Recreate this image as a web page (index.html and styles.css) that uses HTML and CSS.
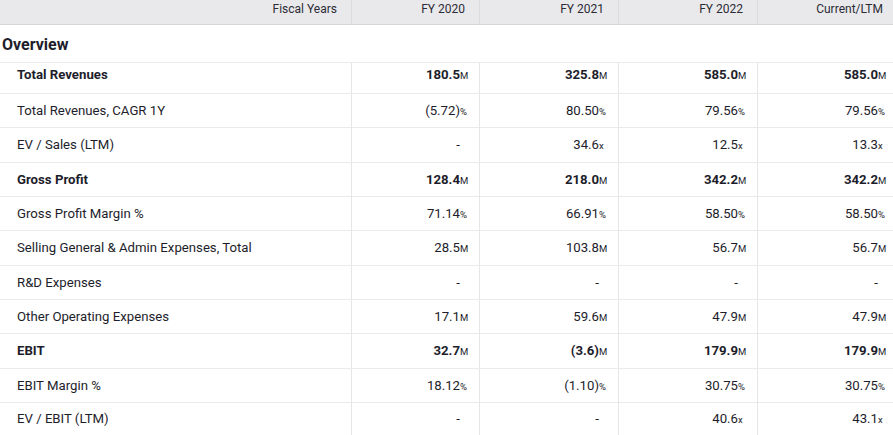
FILE: index.html
```html
<!DOCTYPE html>
<html>
<head>
<meta charset="utf-8">
<link rel="stylesheet" href="styles.css">
</head>
<body>
<div class="fin">
  <div class="row head">
    <div class="cell label">Fiscal Years</div>
    <div class="cell">FY 2020</div>
    <div class="cell">FY 2021</div>
    <div class="cell">FY 2022</div>
    <div class="cell">Current/LTM</div>
  </div>
  <div class="row section"><div class="section-title">Overview</div></div>

  <div class="row first strong">
    <div class="cell label">Total Revenues</div>
    <div class="cell">180.5<span class="sfx">M</span></div>
    <div class="cell">325.8<span class="sfx">M</span></div>
    <div class="cell">585.0<span class="sfx">M</span></div>
    <div class="cell">585.0<span class="sfx">M</span></div>
  </div>
  <div class="row">
    <div class="cell label">Total Revenues, CAGR 1Y</div>
    <div class="cell">(5.72)<span class="sfx">%</span></div>
    <div class="cell">80.50<span class="sfx">%</span></div>
    <div class="cell">79.56<span class="sfx">%</span></div>
    <div class="cell">79.56<span class="sfx">%</span></div>
  </div>
  <div class="row">
    <div class="cell label">EV / Sales (LTM)</div>
    <div class="cell">-<span class="sfx"></span></div>
    <div class="cell">34.6<span class="sfx">x</span></div>
    <div class="cell">12.5<span class="sfx">x</span></div>
    <div class="cell">13.3<span class="sfx">x</span></div>
  </div>
  <div class="row strong">
    <div class="cell label">Gross Profit</div>
    <div class="cell">128.4<span class="sfx">M</span></div>
    <div class="cell">218.0<span class="sfx">M</span></div>
    <div class="cell">342.2<span class="sfx">M</span></div>
    <div class="cell">342.2<span class="sfx">M</span></div>
  </div>
  <div class="row">
    <div class="cell label">Gross Profit Margin %</div>
    <div class="cell">71.14<span class="sfx">%</span></div>
    <div class="cell">66.91<span class="sfx">%</span></div>
    <div class="cell">58.50<span class="sfx">%</span></div>
    <div class="cell">58.50<span class="sfx">%</span></div>
  </div>
  <div class="row">
    <div class="cell label">Selling General &amp; Admin Expenses, Total</div>
    <div class="cell">28.5<span class="sfx">M</span></div>
    <div class="cell">103.8<span class="sfx">M</span></div>
    <div class="cell">56.7<span class="sfx">M</span></div>
    <div class="cell">56.7<span class="sfx">M</span></div>
  </div>
  <div class="row">
    <div class="cell label">R&amp;D Expenses</div>
    <div class="cell">-<span class="sfx"></span></div>
    <div class="cell">-<span class="sfx"></span></div>
    <div class="cell">-<span class="sfx"></span></div>
    <div class="cell">-<span class="sfx"></span></div>
  </div>
  <div class="row">
    <div class="cell label">Other Operating Expenses</div>
    <div class="cell">17.1<span class="sfx">M</span></div>
    <div class="cell">59.6<span class="sfx">M</span></div>
    <div class="cell">47.9<span class="sfx">M</span></div>
    <div class="cell">47.9<span class="sfx">M</span></div>
  </div>
  <div class="row strong">
    <div class="cell label">EBIT</div>
    <div class="cell">32.7<span class="sfx">M</span></div>
    <div class="cell">(3.6)<span class="sfx">M</span></div>
    <div class="cell">179.9<span class="sfx">M</span></div>
    <div class="cell">179.9<span class="sfx">M</span></div>
  </div>
  <div class="row">
    <div class="cell label">EBIT Margin %</div>
    <div class="cell">18.12<span class="sfx">%</span></div>
    <div class="cell">(1.10)<span class="sfx">%</span></div>
    <div class="cell">30.75<span class="sfx">%</span></div>
    <div class="cell">30.75<span class="sfx">%</span></div>
  </div>
  <div class="row last">
    <div class="cell label">EV / EBIT (LTM)</div>
    <div class="cell">-<span class="sfx"></span></div>
    <div class="cell">-<span class="sfx"></span></div>
    <div class="cell">40.6<span class="sfx">x</span></div>
    <div class="cell">43.1<span class="sfx">x</span></div>
  </div>
</div>
</body>
</html>
```

FILE: styles.css
```css
html, body {
  margin: 0;
  padding: 0;
  background: #ffffff;
  overflow: hidden;
}
body {
  font-family: Roboto, "Liberation Sans", sans-serif;
  color: #1d1d2b;
  font-size: 13.2px;
}
.fin {
  width: 897px;
}
.row {
  display: grid;
  grid-template-columns: 351px 128px 139px 139px 140px;
  height: 34.33px;
  box-sizing: border-box;
  border-bottom: 1px solid #ebebeb;
}
.cell {
  display: block;
  text-align: right;
  line-height: 33px;
  padding-right: 10px;
  border-left: 1px solid #e6e6e6;
  white-space: nowrap;
}
.cell.label {
  text-align: left;
  padding-left: 17px;
  border-left: none;
}
.sfx {
  display: inline-block;
  width: 9px;
  font-size: 9.5px;
  font-weight: 400;
  text-align: left;
}
.head {
  height: 25px;
  background: #e9e9eb;
  border-bottom: 1px solid #d6d6d8;
  color: #2c2c36;
  font-size: 12px;
}
.head .cell {
  line-height: 18px;
  padding-right: 14px;
  border-left: 1px solid #dcdcdf;
}
.head .cell.label {
  text-align: right;
  border-left: none;
}
.section {
  display: flex;
  align-items: center;
  height: 38px;
}
.section-title {
  font-size: 16px;
  font-weight: 700;
  padding-left: 2px;
  padding-top: 1px;
}
.first {
  height: 31px;
}
.first .cell {
  line-height: 24px;
}
.strong .cell {
  font-weight: 700;
}
.last {
  height: 40px;
  border-bottom: none;
}
.last .cell {
  line-height: 31px;
}
```
